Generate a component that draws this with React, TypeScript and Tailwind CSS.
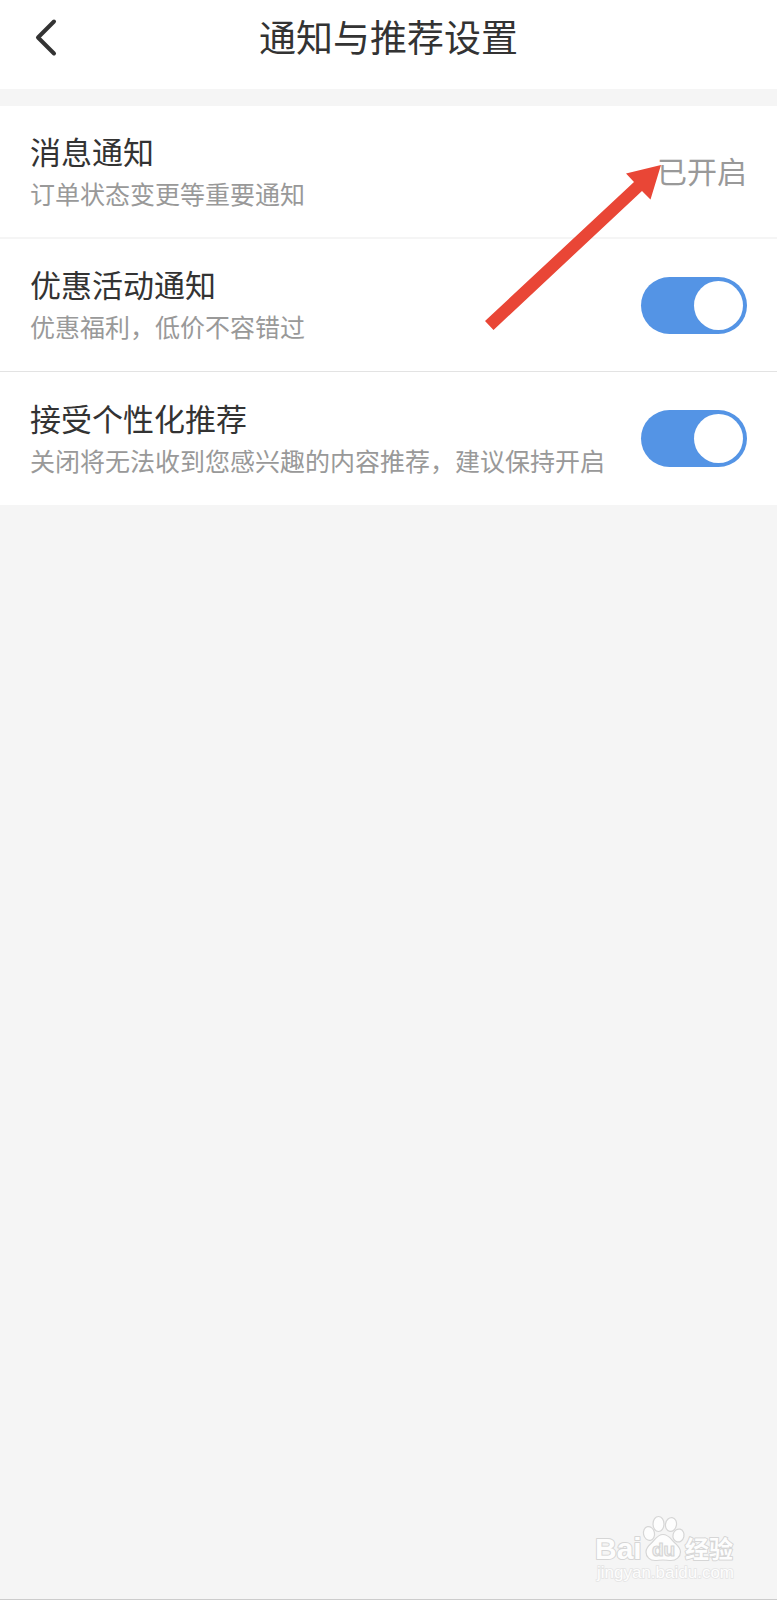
import { useState } from "react";

type SwitchRowProps = {
  id: string;
  title: string;
  note: string;
  divider?: string;
};

const rowClass = "flex items-center justify-between bg-white px-[30px]";

function RowText({ title, note }: { title: string; note: string }) {
  return (
    <span className="flex flex-col">
      <span className="text-[31px] leading-[42px] text-[#333333]">{title}</span>
      <span className="text-[25px] leading-[42px] text-[#999999]">{note}</span>
    </span>
  );
}

function SwitchRow({ id, title, note, divider = "" }: SwitchRowProps) {
  const [on, setOn] = useState(true);
  return (
    <li className={`${rowClass} min-h-[133px] ${divider}`}>
      <label htmlFor={id} className="min-w-0 flex-1">
        <RowText title={title} note={note} />
      </label>
      <input
        id={id}
        type="checkbox"
        role="switch"
        checked={on}
        onChange={(e) => setOn(e.target.checked)}
        className="flex h-[57px] w-[106px] shrink-0 cursor-pointer appearance-none items-center rounded-full bg-[#cccccc] px-1 before:block before:size-[49px] before:rounded-full before:bg-white checked:justify-end checked:bg-[#5494e5]"
      />
    </li>
  );
}

function Arrow() {
  return (
    <svg
      className="pointer-events-none absolute top-[59px] right-[116px] z-10"
      width="176"
      height="166"
      viewBox="485 165 176 166"
      aria-hidden="true"
    >
      <path
        d="M661 165 L650.5 199.5 L642 191 L493.5 330 L485 321 L634 182 L626 173.5 Z"
        fill="#e94636"
      />
    </svg>
  );
}

function Watermark() {
  return (
    <svg
      className="absolute right-[38px] bottom-[13px]"
      width="146"
      height="74"
      viewBox="593 1512 146 74"
      fontFamily='"Liberation Sans", "Noto Sans CJK SC", sans-serif'
      fill="#fdfdfd"
      stroke="#d6d6d6"
    >
      <g fontWeight="700" strokeWidth="2" paintOrder="stroke" strokeLinejoin="round">
        <text x="595" y="1559" fontSize="30">Bai</text>
        <text x="685" y="1558" fontSize="24">经验</text>
      </g>
      <g strokeWidth="1.2">
        <ellipse cx="649" cy="1533.500" rx="5.500" ry="7" transform="rotate(-12 649 1533.5)" />
        <ellipse cx="658.500" cy="1524" rx="5.500" ry="7.500" />
        <ellipse cx="671" cy="1524.500" rx="5.500" ry="7" transform="rotate(10 671 1524.5)" />
        <ellipse cx="678.500" cy="1535.500" rx="5.500" ry="6.500" transform="rotate(14 678.5 1535.5)" />
        <path d="M663 1534.500 C657 1534.500 655 1540 651.500 1543 C648 1546 646 1548 646 1552 C646 1557 650 1560.500 655 1560.500 C658 1560.500 660 1560 663 1560 C666 1560 668 1560.500 671 1560.500 C676 1560.500 680.500 1557 680.500 1552 C680.500 1548 678 1546 675 1543 C671 1539.500 669 1534.500 663 1534.500 Z" />
      </g>
      <text x="652" y="1556" fontSize="19" fontWeight="700" fill="#f5f5f5" strokeWidth="1.2">du</text>
      <text x="597" y="1578" fontSize="17" stroke="#e4e4e4" strokeWidth="1.5" paintOrder="stroke">
        jingyan.baidu.com
      </text>
    </svg>
  );
}

export default function App() {
  return (
    <div className="relative min-h-screen border-b border-[#cccccc] bg-[#f5f5f5] font-['Noto_Sans_CJK_SC',sans-serif]">
      <header className="grid grid-cols-[90px_1fr_90px] items-start bg-white pb-[13px]">
        <button type="button" aria-label="返回" className="flex h-[76px] items-center pl-[34px]">
          <svg width="24" height="40" viewBox="0 0 24 40" fill="none" stroke="#333333" strokeWidth="4" strokeLinecap="round" strokeLinejoin="round" aria-hidden="true">
            <path d="M20 3.500 L4 19.500 L20 35.500" />
          </svg>
        </button>
        <h1 className="text-center text-[37px] leading-[73px] text-[#333333]">通知与推荐设置</h1>
      </header>

      <main className="pt-[17px]">
        <ul>
          <li className="relative">
            <button type="button" className={`${rowClass} min-h-[133px] w-full border-b-2 border-[#f5f5f5] text-left`}>
              <RowText title="消息通知" note="订单状态变更等重要通知" />
              <span className="pb-1 text-[30px] leading-[42px] text-[#999999]">已开启</span>
            </button>
            <Arrow />
          </li>
          <SwitchRow
            id="promo"
            title="优惠活动通知"
            note="优惠福利，低价不容错过"
            divider="border-b border-[#e3e3e3]"
          />
          <SwitchRow
            id="personal"
            title="接受个性化推荐"
            note="关闭将无法收到您感兴趣的内容推荐，建议保持开启"
          />
        </ul>
      </main>
      <Watermark />
    </div>
  );
}
